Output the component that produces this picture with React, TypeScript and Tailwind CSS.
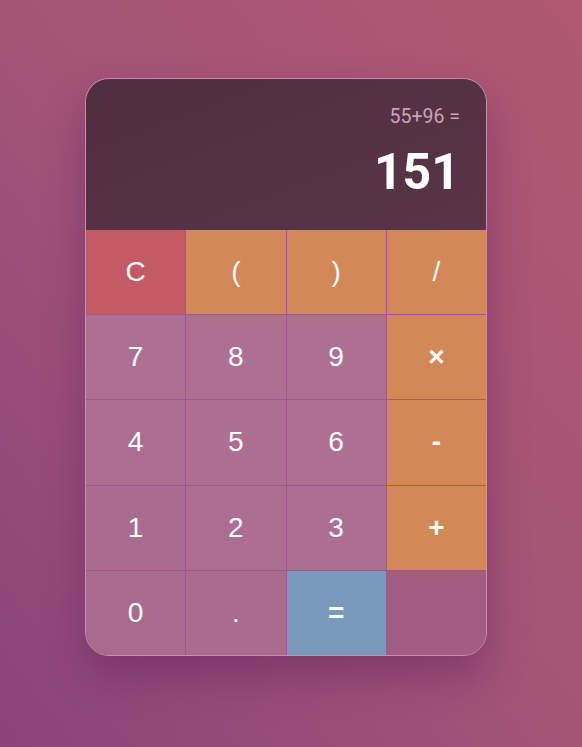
export default function App() {
  const keys: { label: string; cls: string }[] = [
    { label: 'C', cls: 'bg-[#c45a64]' },
    { label: '(', cls: 'bg-[#d38957]' },
    { label: ')', cls: 'bg-[#d38957]' },
    { label: '/', cls: 'bg-[#d38957]' },
    { label: '7', cls: 'bg-[#ad7092]' },
    { label: '8', cls: 'bg-[#ad7092]' },
    { label: '9', cls: 'bg-[#ad7092]' },
    { label: '×', cls: 'bg-[#d38957] font-bold' },
    { label: '4', cls: 'bg-[#ab6e91]' },
    { label: '5', cls: 'bg-[#ac6f91]' },
    { label: '6', cls: 'bg-[#ad7091]' },
    { label: '-', cls: 'bg-[#d38957] font-bold' },
    { label: '1', cls: 'bg-[#a96c90]' },
    { label: '2', cls: 'bg-[#ab6d90]' },
    { label: '3', cls: 'bg-[#ad6f91]' },
    { label: '+', cls: 'bg-[#d38957] font-bold' },
    { label: '0', cls: 'bg-[#a76b8e]' },
    { label: '.', cls: 'bg-[#a96c8e]' },
    { label: '=', cls: 'bg-[#7899ba] font-bold' },
    { label: '', cls: 'bg-[#a45c80]' },
  ]

  return (
    <div className="min-h-screen w-full bg-gradient-to-bl from-[#b05872] via-[#a45476] to-[#8a447a] pl-[85px] pt-[78px]">
      <div className="w-[402px] overflow-hidden rounded-[24px] border border-[#c78eb0] shadow-[0_20px_40px_rgba(90,30,90,0.45)]">
        <div className="flex h-[151px] flex-col items-end bg-gradient-to-br from-[#4f2e40] to-[#5a3446] pr-[26px] pt-[26px] font-['Roboto',sans-serif]">
          <div className="text-[19.5px] leading-[24px] text-[#c8a6b7]">55+96 =</div>
          <div className="mt-[14px] text-[50px] font-bold leading-[58px] text-white">151</div>
        </div>
        <div className="grid grid-cols-4 gap-px bg-[#a0588a]">
          {keys.map((k, i) => (
            <div
              key={i}
              className={`flex h-[84.2px] items-center justify-center font-['Liberation_Sans',Arial,sans-serif] text-[28px] text-white ${k.cls}`}
            >
              {k.label}
            </div>
          ))}
        </div>
      </div>
    </div>
  )
}
